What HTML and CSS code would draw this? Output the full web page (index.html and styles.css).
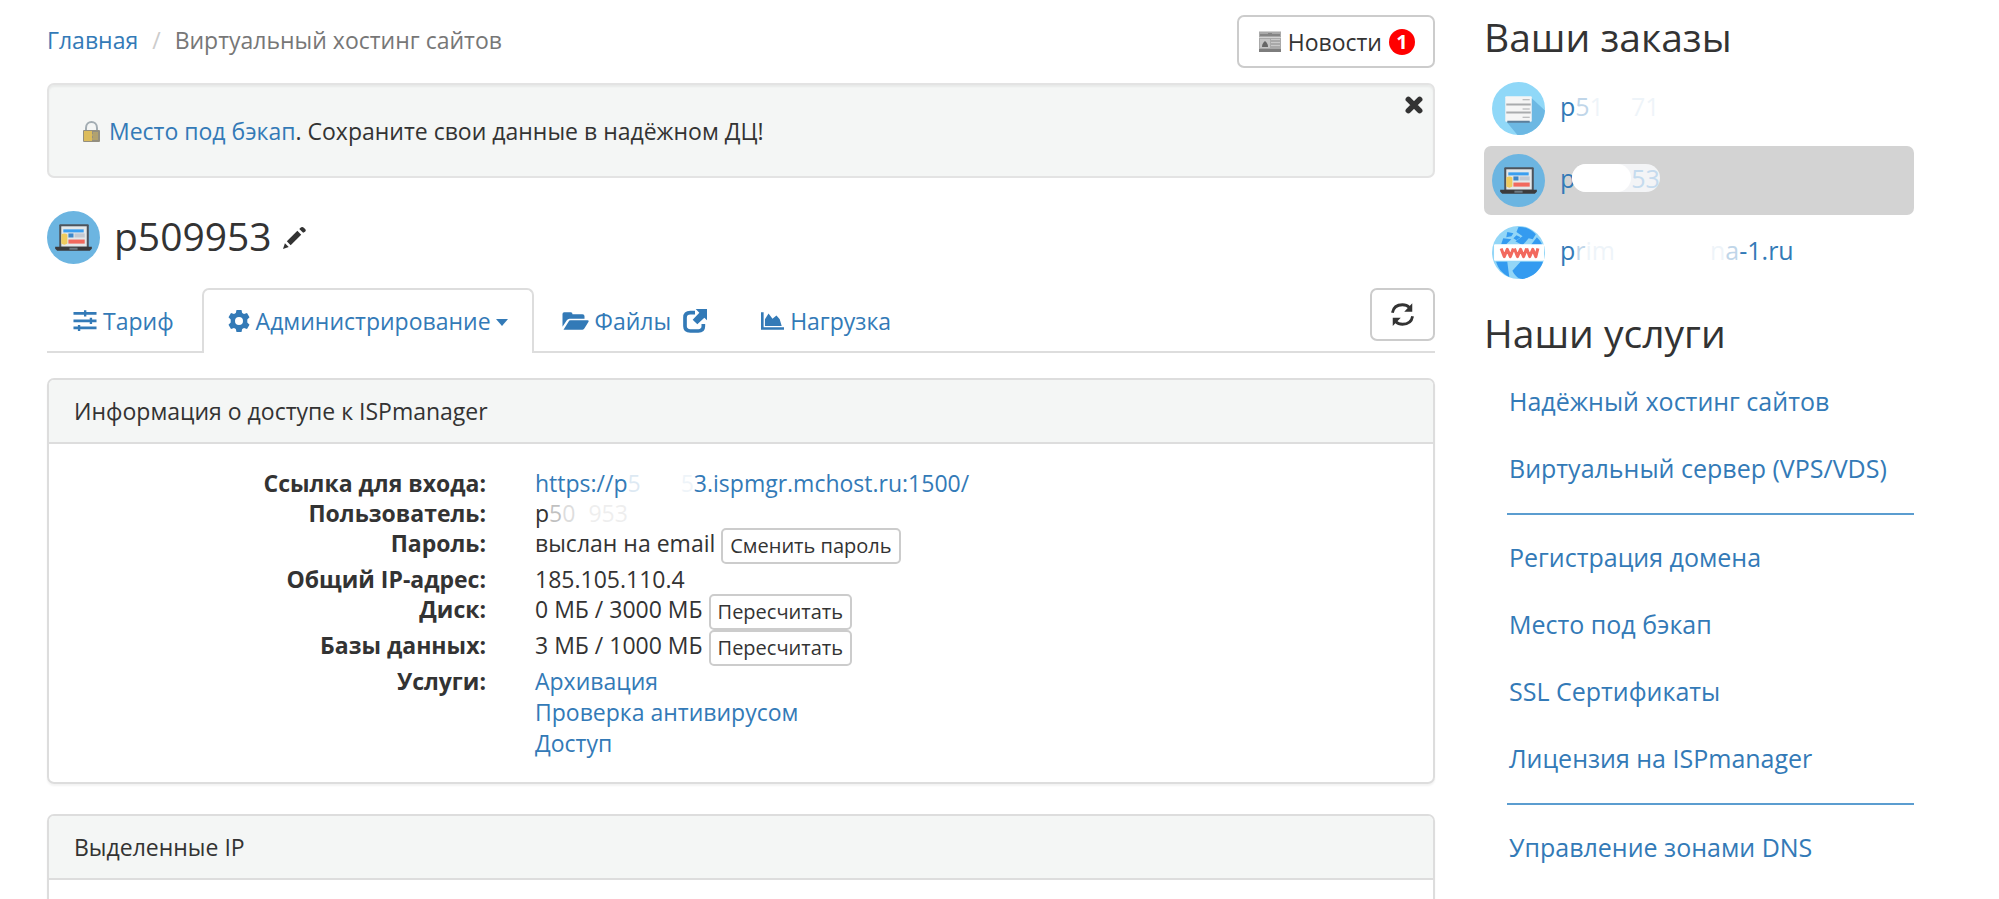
FILE: index.html
```html
<!DOCTYPE html>
<html lang="ru">
<head>
<meta charset="utf-8">
<title>Виртуальный хостинг сайтов</title>
<link rel="stylesheet" href="styles.css">
</head>
<body>
<svg class="sprite" aria-hidden="true">
  <symbol id="laptop" viewBox="0 0 52 52">
    <circle cx="26" cy="26" r="26" fill="#6cb5e1"/>
    <rect x="12" y="13" width="29" height="23" rx="1" fill="#4d545c"/>
    <rect x="14" y="15" width="25" height="20" fill="#e4e8ea"/>
    <rect x="16" y="18" width="20" height="3" fill="#3a9ff0"/>
    <path d="M14 23q3-2 6 0v9q-3 2-6 0z" fill="#efcb5e"/>
    <rect x="21" y="22" width="5" height="4" fill="#3e86c8"/>
    <rect x="27" y="22" width="10" height="4" fill="#c3c9d2"/>
    <rect x="21" y="28" width="16" height="4" fill="#f2695e"/>
    <path d="M8 35h36v2l-2 2H10l-2-2z" fill="#3b3b3d"/>
    <rect x="22" y="36" width="8" height="2" fill="#6d7a84"/>
  </symbol>
  <symbol id="server" viewBox="0 0 52 52">
    <circle cx="26" cy="26" r="26" fill="#90d8f8"/>
    <path d="M39 16l13 12a26 26 0 0 1-27 24L15 40z" fill="#6cb8e3"/>
    <rect x="13" y="14" width="26" height="25" rx="1" fill="#f5f5f5"/>
    <path d="M14 21h24v2H14zM14 29h24v2H14z" fill="#a9abad"/>
    <path d="M30 17h7v1h-7zM30 26h7v1h-7zM30 34h7v1h-7z" fill="#a9abad"/>
    <path d="M15 38h22v2H15z" fill="#5d7f9b"/>
  </symbol>
  <symbol id="globe" viewBox="0 0 52 52">
    <circle cx="26" cy="26" r="26" fill="#93d6f7"/>
    <path d="M26 1c8-1 14 4 17 7l-3 5-4-1-6 7-7-4 7-5-6-4zM44 11c3 3 5 6 6 9H37zM4 35h11l1 8 1 7C9 46 6 41 4 35zM20 44l8-9h22c-3 9-10 15-20 17-5 0-8-4-10-8z" fill="#349bf0"/>
    <path d="M15 6l6 1-2 3-5 1zM11 12l8 1-5 5H9zM24 9l4 2-4 3-3-2z" fill="#349bf0"/>
    <rect x="2" y="18" width="49" height="16" rx="1" fill="#fff"/>
    <path d="M9 22l3 8 3-7 3 7 3-8M22 22l3 8 3-7 3 7 3-8M34 22l3 8 3-7 3 7 2-8" fill="none" stroke="#f2695e" stroke-width="3" stroke-linejoin="round"/>
  </symbol>
</svg>
<div class="page">
  <main class="main">
    <header class="top">
      <nav class="crumbs" aria-label="Навигация">
        <a href="#">Главная</a><span class="slash">/</span><span class="current">Виртуальный хостинг сайтов</span>
      </nav>
      <button class="btn news" type="button">
        <svg class="paper" viewBox="0 0 22 21" aria-hidden="true">
          <rect width="22" height="21" fill="#a9a9a9"/>
          <path d="M0 0h22v1H0zM0 6h22v1H0z" fill="#d2d2d2"/>
          <path d="M1 3h8v2H1zM13 3h8v2h-8zM9 2h4v3H9z" fill="#858585"/>
          <rect x="1" y="8" width="10" height="9" fill="#c4c4c4"/>
          <path d="M3 16c0-3 1-4 3-6 2 2 3 3 3 6z" fill="#666"/>
          <path d="M12 8h9v1h-9zM12 11h9v1h-9zM12 14h9v1h-9z" fill="#c9c9c9"/>
          <path d="M0 18h22v3H0z" fill="#7d7d7d"/>
        </svg>
        <span>Новости</span><span class="badge">1</span>
      </button>
    </header>

    <section class="well">
      <svg class="lock" viewBox="0 0 17 21" aria-hidden="true">
        <path d="M3 11V7c0-8 11-8 11 0v4" fill="none" stroke="#a3adb3" stroke-width="2"/>
        <rect y="9" width="17" height="12" rx="1" fill="#938f80"/>
        <path d="M1 10h8v10H1z" fill="#dcbc5c"/>
        <path d="M10 12h5M9 14h6M10 16h5M9 18h6" stroke="#d0b45e"/>
      </svg>
      <p><a href="#">Место под бэкап</a>. Сохраните свои данные в надёжном ДЦ!</p>
      <button class="close" type="button" aria-label="Закрыть">
        <svg viewBox="0 0 16 16" aria-hidden="true"><path d="M3 3l10 10M13 3L3 13" stroke="#333" stroke-width="5" stroke-linecap="round"/></svg>
      </button>
    </section>

    <div class="title">
      <svg class="avatar" aria-hidden="true"><use href="#laptop"/></svg>
      <h1>p509953</h1>
      <button class="edit" type="button" aria-label="Переименовать">
        <svg viewBox="0 0 24 24" aria-hidden="true"><path d="M0 24l2-6 4 4zM4 16L15 5l4 4L8 20zM17 3l1-1q2-2 4 0 3 2 1 4l-2 1z" fill="#333"/></svg>
      </button>
    </div>

    <div class="tabbar">
      <nav class="tabs" aria-label="Разделы">
        <a class="tab" href="#">
          <svg class="i-sliders" viewBox="0 0 70 62" aria-hidden="true"><path d="M1 6h68v8H1zM1 28h68v8H1zM1 49h68v8H1zM32 1h7v18h-7zM49 23h7v18h-7zM14 44h7v18h-7z" fill="currentColor"/></svg>
          <span>Тариф</span></a>
        <a class="tab active" href="#" aria-current="page">
          <svg class="i-gear" viewBox="0 0 22 22" aria-hidden="true"><path fill="currentColor" fill-rule="evenodd" d="M8.500 0h5l.7 3 1.800 1 3-1 2.500 4.300-2.200 2.200v3l2.200 2.200L19 19l-3-1-1.800 1-.7 3h-5l-.7-3L6 18l-3 1L.5 14.700l2.200-2.200v-3L.5 7.300 3 3l3 1 1.800-1zM11 7a4 4 0 1 0 0 8 4 4 0 0 0 0-8z"/></svg>
          <span>Администрирование</span><span class="caret"></span></a>
        <a class="tab" href="#">
          <svg class="i-folder" viewBox="0 0 80 54" aria-hidden="true"><path d="M1 44V6q0-5 5-5h20q5 0 5 6h30q6 0 6 6v7H22q-5 0-8 5zM4 53l15-24q2-4 6-4h51q5 0 3 4L67 49q-2 4-6 4z" fill="currentColor"/></svg>
          <span>Файлы</span>
          <svg class="i-ext" viewBox="0 0 72 72" aria-hidden="true"><path d="M36 11H22Q6 11 6 26v26q0 14 16 14h24q15 0 15-14v-7" fill="none" stroke="currentColor" stroke-width="11"/><path d="M38 0h34v34l-8-8-21 20-14-14 20-21z" fill="currentColor"/></svg></a>
        <a class="tab" href="#">
          <svg class="i-chart" viewBox="0 0 70 54" aria-hidden="true"><path d="M0 0h8v46h62v8H0zM12 42V22L23 4l12 16 12-10 10 12 6 20z" fill="currentColor"/></svg>
          <span>Нагрузка</span></a>
      </nav>
      <button class="btn refresh" type="button" aria-label="Обновить">
        <svg viewBox="0 0 66 66" aria-hidden="true"><path d="M4 28Q8 5 33 5q12 0 20 8M62 38Q58 61 33 61q-12 0-20-8" fill="none" stroke="#333" stroke-width="8"/><path d="M61 1v24H38zM5 66V42h23z" fill="#333"/></svg>
      </button>
    </div>

    <section class="panel">
      <h2 class="panel-head">Информация о доступе к ISPmanager</h2>
      <dl class="info">
        <dt>Ссылка для входа:</dt>
        <dd><a href="#">https://p<span class="faint">5</span><span class="gap-l"></span><span class="ghost">5</span>3.ispmgr.mchost.ru:1500/</a></dd>
        <dt>Пользователь:</dt>
        <dd>p<span class="dim">5</span><span class="faint">0</span><span class="gap-s"></span><span class="ghost">953</span></dd>
        <dt>Пароль:</dt>
        <dd>выслан на email <button class="btn small" type="button">Сменить пароль</button></dd>
        <dt>Общий IP-адрес:</dt>
        <dd>185.105.110.4</dd>
        <dt>Диск:</dt>
        <dd>0 МБ / 3000 МБ <button class="btn small" type="button">Пересчитать</button></dd>
        <dt>Базы данных:</dt>
        <dd>3 МБ / 1000 МБ <button class="btn small" type="button">Пересчитать</button></dd>
        <dt>Услуги:</dt>
        <dd class="links"><a href="#">Архивация</a><a href="#">Проверка антивирусом</a><a href="#">Доступ</a></dd>
      </dl>
    </section>

    <section class="panel">
      <h2 class="panel-head">Выделенные IP</h2>
      <div class="panel-body"></div>
    </section>
  </main>

  <aside class="side">
    <h2>Ваши заказы</h2>
    <nav class="orders" aria-label="Ваши заказы">
      <a class="order" href="#"><svg class="avatar" aria-hidden="true"><use href="#server"/></svg><span class="name">p<span class="dim">5</span><span class="ghost">1</span><span class="gap-m"></span><span class="ghost">71</span></span></a>
      <a class="order selected" href="#"><svg class="avatar" aria-hidden="true"><use href="#laptop"/></svg><span class="name">p<span class="pill"><span class="cover"></span><span>53</span></span></span></a>
      <a class="order" href="#"><svg class="avatar" aria-hidden="true"><use href="#globe"/></svg><span class="name">p<span class="dim">r</span><span class="ghost">im</span><span class="gap-xl"></span><span class="ghost">n</span><span class="dim">a</span>-1.ru</span></a>
    </nav>
    <h2>Наши услуги</h2>
    <nav class="services" aria-label="Наши услуги">
      <a href="#">Надёжный хостинг сайтов</a>
      <a href="#">Виртуальный сервер (VPS/VDS)</a>
      <hr>
      <a href="#">Регистрация домена</a>
      <a href="#">Место под бэкап</a>
      <a href="#">SSL Сертификаты</a>
      <a href="#">Лицензия на ISPmanager</a>
      <hr>
      <a href="#">Управление зонами DNS</a>
    </nav>
  </aside>
</div>
</body>
</html>
```
FILE: styles.css
```css
* { box-sizing: border-box; }
html { overflow: hidden; }
body {
  margin: 0;
  background: #fff;
  color: #333;
  font-family: "Open Sans", "Noto Sans", sans-serif;
  font-size: 23px;
  line-height: 30px;
}
a { color: #337ab7; text-decoration: none; }
h1, h2, p, dl, dd { margin: 0; font-weight: 400; }
button { font: inherit; color: inherit; cursor: pointer; }
svg { display: block; flex: none; }
.sprite { position: absolute; width: 0; height: 0; }

.page {
  display: grid;
  grid-template-columns: 1388fr 430fr;
  gap: 49px;
  padding: 15px 85px 0 47px;
}

.btn {
  background: #fff;
  border: 2px solid #ccc;
  border-radius: 7px;
}
.top { display: flex; justify-content: space-between; align-items: flex-start; }
.crumbs { display: flex; padding-top: 10px; }
.slash { color: #ccc; padding: 0 14px; }
.current { color: #777; }
.news { display: flex; align-items: center; gap: 7px; height: 53px; padding: 0 18px 0 20px; }
.paper { width: 22px; height: 21px; }
.badge {
  width: 26px;
  height: 26px;
  border-radius: 50%;
  background: #f00;
  color: #fff;
  font-size: 20px;
  font-weight: 700;
  line-height: 26px;
  text-align: center;
}

.well {
  display: flex;
  align-items: flex-start;
  height: 95px;
  margin-top: 15px;
  padding: 31px 10px 0 34px;
  background: #f4f6f5;
  border: 2px solid #e3e3e3;
  border-radius: 7px;
  box-shadow: inset 0 2px 2px rgba(0, 0, 0, .05);
}
.lock { width: 17px; height: 21px; margin: 5px 9px 0 0; }
.close, .edit { padding: 0; border: 0; background: none; }
.close { margin: -20px 0 0 auto; }
.close svg { width: 18px; height: 18px; }

.title { display: flex; align-items: center; margin-top: 33px; }
.avatar { width: 53px; height: 53px; }
h1, .side h2 { font-size: 39px; line-height: 44px; }
h1 { margin-left: 14px; padding-bottom: 3px; }
.edit { margin-left: 11px; }
.edit svg { width: 23px; height: 23px; }

.tabbar {
  display: flex;
  justify-content: space-between;
  align-items: flex-start;
  margin-top: 24px;
  border-bottom: 2px solid #ddd;
}
.tabs { display: flex; gap: 2px; margin-bottom: -2px; }
.tab {
  display: flex;
  align-items: center;
  gap: 6px;
  height: 65px;
  padding: 0 24px 2px;
  border: 2px solid transparent;
  border-bottom: 0;
  border-radius: 7px 7px 0 0;
}
.tab.active { background: #fff; border-color: #ddd; }
.i-sliders { width: 24px; height: 21px; }
.i-gear { width: 22px; height: 22px; }
.i-folder { width: 27px; height: 18px; }
.i-ext { width: 24px; height: 24px; margin-left: 6px; }
.i-chart { width: 23px; height: 18px; }
.caret {
  border: 6px solid transparent;
  border-top: 7px solid currentColor;
  border-bottom: 0;
  margin: 4px 0 0 -1px;
}
.refresh { width: 65px; height: 53px; padding: 0 19px; }
.refresh svg { width: 23px; height: 23px; }

.panel {
  margin-top: 25px;
  border: 2px solid #ddd;
  border-radius: 7px;
  box-shadow: 0 2px 2px rgba(0, 0, 0, .05);
}
.panel + .panel { margin-top: 30px; }
.panel-head {
  padding: 16px 25px 15px;
  background: #f4f6f5;
  border-bottom: 2px solid #ddd;
  border-radius: 5px 5px 0 0;
  font-size: 23px;
  line-height: 31px;
}
.panel-body { height: 24px; }
.info {
  display: grid;
  grid-template-columns: 437px 1fr;
  column-gap: 49px;
  padding: 24px 0 23px;
}
.info dt { font-weight: 700; text-align: right; }
.info dd { display: flex; white-space: pre; }
.small { height: 36px; padding: 0 7px; border-radius: 5px; font-size: 20px; line-height: 30px; }
.info .links { flex-direction: column; line-height: 31px; }

.dim { opacity: .3; }
.faint { opacity: .16; }
.ghost { opacity: .08; }
.gap-s, .gap-m, .gap-l, .gap-xl { display: inline-block; height: 1px; }
.gap-s { width: 13px; }
.gap-m { width: 27px; }
.gap-l { width: 40px; }
.gap-xl { width: 95px; }

.orders { display: grid; gap: 3px; margin-top: 15px; }
.order {
  display: flex;
  align-items: center;
  height: 69px;
  padding-left: 8px;
  border-radius: 7px;
  font-size: 25px;
}
.order .avatar { margin-right: 15px; }
.order.selected { background: #d3d3d3; }
.name { display: flex; align-items: center; padding-bottom: 5px; }
.name > [class^="gap"] { flex: none; }
.pill {
  display: flex;
  height: 28px;
  margin-left: -3px;
  border-radius: 14px;
  background: #f3f4f6;
  line-height: 28px;
  color: #c5dbee;
}
.cover { width: 59px; border-radius: 14px; background: #fff; }
.orders + h2 { margin-top: 24px; }
.services { margin: 13px 0 0 23px; }
.services a { display: block; padding: 16px 2px; font-size: 25px; line-height: 35px; }
.services hr { height: 2px; margin: 11px 0 9px; border: 0; background: #5b9dd0; }
```
